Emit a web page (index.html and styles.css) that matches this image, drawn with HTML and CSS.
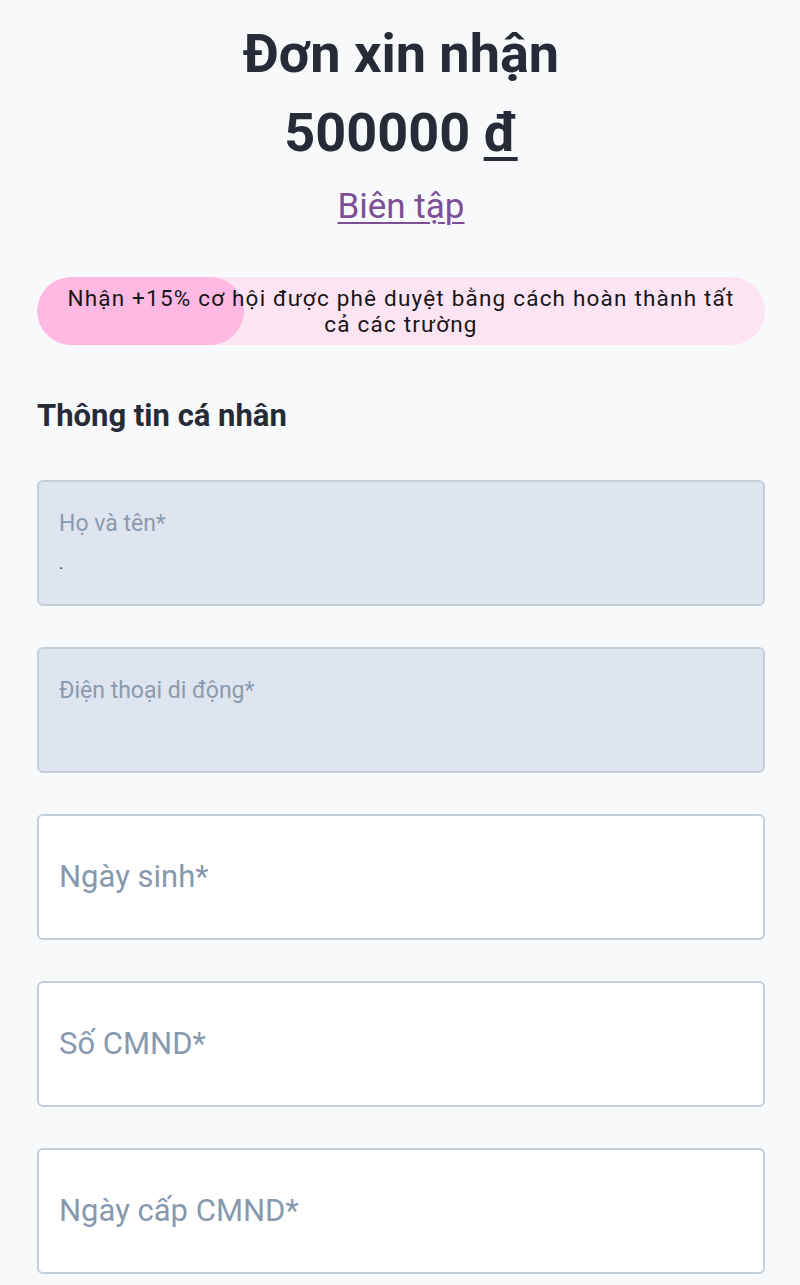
FILE: index.html
```html
<!DOCTYPE html>
<html lang="vi">
<head>
<meta charset="utf-8">
<link rel="stylesheet" href="styles.css">
</head>
<body>
<main class="page">
  <header class="head">
    <h1 class="title">Đơn xin nhận</h1>
    <div class="amount">500000 <span class="cur">đ</span></div>
    <a class="edit" href="#">Biên tập</a>
  </header>

  <div class="progress">
    <div class="progress-fill" style="width:28.5%"></div>
    <p class="progress-text">Nhận +15% cơ hội được phê duyệt bằng cách hoàn thành tất cả các trường</p>
  </div>

  <h2 class="section">Thông tin cá nhân</h2>

  <div class="fields">
    <div class="field filled">
      <span class="label-small">Họ và tên*</span>
      <span class="value">.</span>
    </div>
    <div class="field filled">
      <span class="label-small">Điện thoại di động*</span>
    </div>
    <div class="field empty">
      <span class="label">Ngày sinh*</span>
    </div>
    <div class="field empty">
      <span class="label">Số CMND*</span>
    </div>
    <div class="field empty">
      <span class="label">Ngày cấp CMND*</span>
    </div>
  </div>
</main>
</body>
</html>
```

FILE: styles.css
```css
* { box-sizing: border-box; }
html, body {
  margin: 0;
  padding: 0;
  background: #f8f9fb;
  font-family: Roboto, "Noto Sans", sans-serif;
  color: #262b37;
}
.page {
  padding: 22px 35px 0 37px;
  display: flex;
  flex-direction: column;
}
.head {
  display: flex;
  flex-direction: column;
  align-items: center;
}
.title {
  margin: 0;
  font-size: 54px;
  font-weight: 700;
  line-height: 64px;
}
.amount {
  font-size: 54px;
  font-weight: 700;
  line-height: 80px;
  margin-top: 7px;
}
.cur { text-decoration: underline; text-decoration-thickness: 4px; text-underline-offset: 6px; }
.edit {
  margin-top: 14px;
  font-size: 35px;
  line-height: 40px;
  color: #7d4f97;
  text-decoration: underline;
  text-decoration-thickness: 2px;
  text-underline-offset: 4px;
}
.progress {
  position: relative;
  margin-top: 50px;
  height: 68px;
  border-radius: 34px;
  background: #fde4f2;
  overflow: hidden;
  display: flex;
  align-items: center;
  justify-content: center;
}
.progress-fill {
  position: absolute;
  left: 0; top: 0; bottom: 0;
  background: #fdb9e1;
  border-radius: 34px;
}
.progress-text {
  position: relative;
  margin: 0;
  padding: 0 22px;
  text-align: center;
  font-size: 22.5px;
  line-height: 26px;
  color: #16161a;
  letter-spacing: 1.2px;
}
.section {
  margin: 53px 0 0;
  font-size: 31px;
  font-weight: 700;
  line-height: 36px;
}
.fields {
  margin-top: 46px;
  display: flex;
  flex-direction: column;
  gap: 41px;
}
.field {
  height: 126px;
  border: 2px solid #c4cfdc;
  border-radius: 6px;
  display: flex;
  flex-direction: column;
  padding: 0 20px;
}
.field.filled {
  background: #dfe5ee;
  padding-top: 28px;
}
.field.empty {
  background: #ffffff;
  justify-content: center;
}
.label-small {
  font-size: 23px;
  line-height: 28px;
  color: #8a9ab0;
}
.value {
  margin-top: 16px;
  font-size: 16px;
  line-height: 20px;
  color: #262b37;
}
.label {
  font-size: 31px;
  line-height: 36px;
  color: #8799ae;
}
```
